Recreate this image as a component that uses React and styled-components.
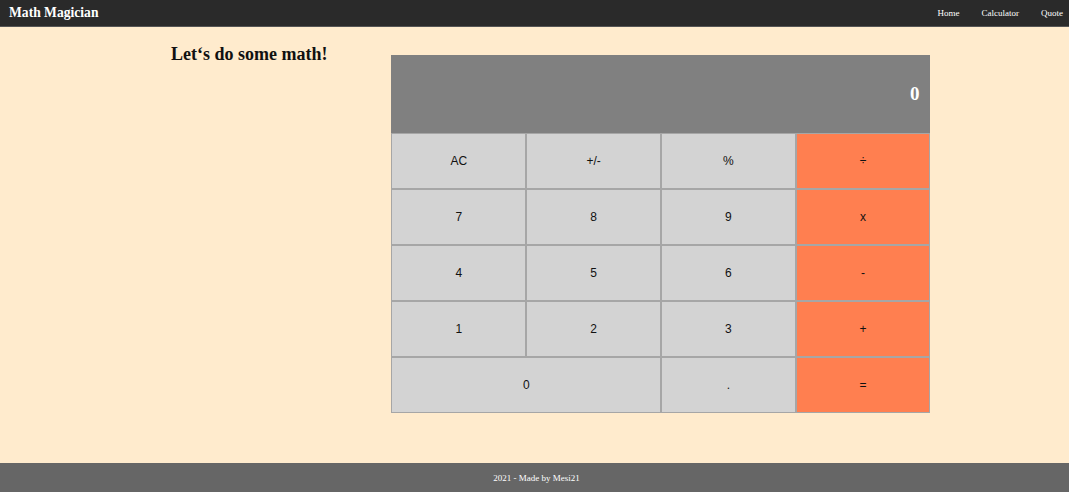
import React from 'react'
import styled, {createGlobalStyle} from 'styled-components'

const GlobalStyle = createGlobalStyle`
  html, body {
    margin: 0;
    padding: 0;
    background: #ffebcd;
    font-family: "Liberation Serif", "Times New Roman", serif;
  }
`

const Page = styled.div`
  display: flex;
  flex-direction: column;
  min-height: 492px;
`

const NavBar = styled.nav`
  display: flex;
  align-items: center;
  justify-content: space-between;
  height: 26px;
  padding: 0 6px 0 9px;
  background: #2a2a2a;
  color: #fff;
  border-bottom: 1px solid #555;
`

const Brand = styled.h1`
  margin: 0;
  font-size: 13.6px;
  font-weight: bold;
`

const NavLinks = styled.ul`
  display: flex;
  gap: 22px;
  margin: 0;
  padding: 0;
  list-style: none;
  font-size: 9px;
`

const Main = styled.main`
  flex: 1;
  display: flex;
  align-items: flex-start;
  gap: 64px;
  padding-left: 171px;
`

const Heading = styled.h2`
  margin: 17px 0 0;
  font-size: 18px;
  font-weight: bold;
  color: #111;
`

const Calculator = styled.div`
  margin-top: 28px;
  width: 539px;
  display: grid;
  grid-template-columns: repeat(4, 1fr);
  grid-template-rows: 78px repeat(5, 56px);
`

const Display = styled.div`
  grid-column: 1 / -1;
  display: flex;
  align-items: center;
  justify-content: flex-end;
  padding-right: 11px;
  background: #808080;
  color: #fff;
  font-size: 19px;
  font-weight: bold;
`

const Key = styled.button`
  grid-column: span ${p => p.$span || 1};
  border: 1px solid #a6a6a6;
  background: ${p => (p.$op ? '#ff7f50' : '#d3d3d3')};
  color: #111;
  font-family: "Liberation Sans", Arial, sans-serif;
  font-size: 12px;
  padding: 0;
  cursor: pointer;
`

const Footer = styled.footer`
  height: 29px;
  display: flex;
  align-items: center;
  justify-content: center;
  background: #666;
  color: #fff;
  font-size: 9px;
  padding-left: 4px;
`

const keys = [
  ['AC'], ['+/-'], ['%'], ['÷', 1, true],
  ['7'], ['8'], ['9'], ['x', 1, true],
  ['4'], ['5'], ['6'], ['-', 1, true],
  ['1'], ['2'], ['3'], ['+', 1, true],
  ['0', 2], ['.'], ['=', 1, true],
]

export default function App() {
  return (
    <Page>
      <GlobalStyle />
      <NavBar>
        <Brand>Math Magician</Brand>
        <NavLinks>
          <li>Home</li>
          <li>Calculator</li>
          <li>Quote</li>
        </NavLinks>
      </NavBar>
      <Main>
        <Heading>Let‘s do some math!</Heading>
        <Calculator>
          <Display>0</Display>
          {keys.map(([label, span, op]) => (
            <Key key={label} $span={span} $op={op}>{label}</Key>
          ))}
        </Calculator>
      </Main>
      <Footer>2021 - Made by Mesi21</Footer>
    </Page>
  )
}
